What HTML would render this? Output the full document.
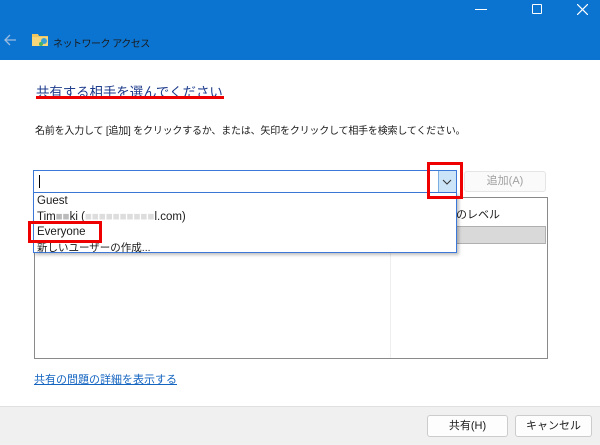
<!DOCTYPE html>
<html><head><meta charset="utf-8"><style>
*{margin:0;padding:0;box-sizing:border-box}
body{width:600px;height:445px;position:relative;overflow:hidden;background:#fff;font-family:"Liberation Sans","Noto Sans CJK JP",sans-serif;font-size:12px;color:#1a1a1a}
.a{position:absolute}
</style></head><body>
<div class="a" style="left:0;top:0;width:600px;height:60px;background:#0b74d1"></div>
<div class="a" style="left:475px;top:9px;width:12px;height:1px;background:#fff"></div>
<div class="a" style="left:532px;top:4px;width:10px;height:10px;border:1px solid #fff;border-radius:1px"></div>
<svg class="a" style="left:577px;top:4px" width="11" height="11"><path d="M0 0L11 11M11 0L0 11" stroke="#fff" stroke-width="1.2"/></svg>
<svg class="a" style="left:4px;top:34px" width="13" height="12"><path d="M1 6H12M6 1L1 6L6 11" stroke="#9bbbe0" stroke-width="1.3" fill="none"/></svg>
<svg class="a" style="left:32px;top:32px" width="16" height="15"><path d="M0 2H6L7 4H16V14H0Z" fill="#f0c75e"/><rect x="0" y="5" width="16" height="9" fill="#f7d67a"/><circle cx="12" cy="9" r="3" fill="#3aa0d8"/><circle cx="9" cy="12" r="2" fill="#45b36b"/></svg>
<div class="a" style="left:53px;top:35px;font-size:10px;letter-spacing:-0.5px;color:#1a1a1a">ネットワーク アクセス</div>
<div class="a" style="left:36px;top:81px;font-size:13.4px;color:#1e3c8c">共有する相手を選んでください</div>
<div class="a" style="left:36px;top:96px;width:188px;height:3px;background:#e00"></div>
<div class="a" style="left:35px;top:122px;font-size:10px;letter-spacing:-0.2px">名前を入力して [追加] をクリックするか、または、矢印をクリックして相手を検索してください。</div>
<div class="a" style="left:34px;top:197px;width:514px;height:162px;border:1px solid #8a8a8a"></div>
<div class="a" style="left:390px;top:198px;width:1px;height:160px;background:#eee"></div>
<div class="a" style="left:456px;top:206px;font-size:11px">のレベル</div>
<div class="a" style="left:391px;top:226px;width:155px;height:18px;background:#d9d9d9;border:1px solid #b0b0b0"></div>
<div class="a" style="left:33px;top:170px;width:424px;height:23px;border:1px solid #3c78d8;background:#fff"></div>
<div class="a" style="left:39px;top:175px;width:1px;height:13px;background:#000"></div>
<div class="a" style="left:438px;top:171px;width:18px;height:21px;background:#cce4f7;border-left:1px solid #7aaee0"></div>
<svg class="a" style="left:442px;top:179px" width="10" height="6"><path d="M1 1L5 5L9 1" stroke="#333" fill="none"/></svg>
<div class="a" style="left:464px;top:171px;width:82px;height:21px;border:1px solid #e5e5e5;border-radius:3px;background:#fafafa;color:#a0a0a0;text-align:center;line-height:19px;font-size:11px">追加(A)</div>
<div class="a" style="left:33px;top:193px;width:424px;height:60px;border:1px solid #3c78d8;border-top:none;background:#fff;box-shadow:2px 2px 3px rgba(0,0,0,.25)"></div>
<div class="a" style="left:37px;top:194px;line-height:15.5px;font-size:11.5px">Guest<br>Tim<span style="color:#bbb">■■</span>ki (<span style="color:#ddd">■■■■■■■■■■</span>l.com)<br>Everyone<br><span style="font-size:10.5px">新しいユーザーの作成...</span></div>
<div class="a" style="left:427px;top:162px;width:36px;height:37px;border:3px solid #e00"></div>
<div class="a" style="left:28px;top:221px;width:74px;height:22px;border:3px solid #e00"></div>
<div class="a" style="left:34px;top:371px;font-size:11px;color:#1565c0;text-decoration:underline">共有の問題の詳細を表示する</div>
<div class="a" style="left:0;top:406px;width:600px;height:39px;background:#f0f0f0;border-top:1px solid #e0e0e0"></div>
<div class="a" style="left:427px;top:415px;width:81px;height:22px;border:1px solid #ccc;border-radius:3px;background:#fdfdfd;text-align:center;line-height:20px;font-size:11px">共有(H)</div>
<div class="a" style="left:515px;top:415px;width:77px;height:22px;border:1px solid #ccc;border-radius:3px;background:#fdfdfd;text-align:center;line-height:20px;font-size:11px">キャンセル</div>
</body></html>
